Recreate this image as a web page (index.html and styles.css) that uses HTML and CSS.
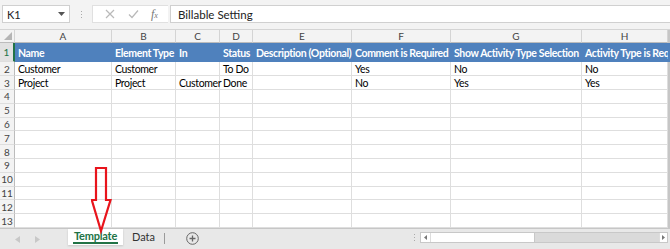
FILE: index.html
```html
<!DOCTYPE html>
<html>
<head>
<meta charset="utf-8">
<link rel="stylesheet" href="styles.css">
</head>
<body>
<div class="app">
  <div class="fbar">
    <div class="namebox"><span>K1</span><span class="dd">
      <svg width="7" height="4" viewBox="0 0 7 4"><path d="M0 0H7L3.5 4Z" fill="#555"/></svg></span></div>
    <div class="vdots"><i></i><i></i><i></i></div>
    <div class="fbtns">
      <svg width="10" height="10" viewBox="0 0 10 10"><path d="M1 1L9 9M9 1L1 9" stroke="#b9b9b9" stroke-width="1.2"/></svg>
      <svg width="11" height="10" viewBox="0 0 11 10"><path d="M1 5.5L4 8.5L10 1.5" stroke="#b9b9b9" stroke-width="1.2" fill="none"/></svg>
      <span class="fx">f<small>x</small></span>
    </div>
    <div class="finput">Billable Setting</div>
  </div>

  <div class="sheet top">
    <div class="corner"><svg width="8" height="8" viewBox="0 0 8 8"><path d="M8 0V8H0Z" fill="#b5b5b5"/></svg></div>
    <div class="ch">A</div><div class="ch">B</div><div class="ch">C</div><div class="ch">D</div><div class="ch">E</div><div class="ch">F</div><div class="ch">G</div><div class="ch">H</div><div class="edge"></div>

    <div class="rh sel">1</div>
    <div class="hc">Name</div><div class="hc">Element Type</div><div class="hc">In</div><div class="hc">Status</div><div class="hc">Description (Optional)</div><div class="hc">Comment is Required</div><div class="hc">Show Activity Type Selection</div><div class="hc last">Activity Type is Required</div><div class="edge hedge"></div>

    <div class="rh">2</div>
    <div class="c">Customer</div><div class="c">Customer</div><div class="c"></div><div class="c">To Do</div><div class="c"></div><div class="c">Yes</div><div class="c">No</div><div class="c">No</div><div class="edge"></div>

    <div class="rh">3</div>
    <div class="c">Project</div><div class="c">Project</div><div class="c">Customer</div><div class="c">Done</div><div class="c"></div><div class="c">No</div><div class="c">Yes</div><div class="c">Yes</div><div class="edge"></div>
  </div>
  <div class="sheet" id="empty"></div>

  <div class="tabbar">
    <div class="navs">
      <svg width="5" height="7" viewBox="0 0 5 7"><path d="M5 0V7L0 3.5Z" fill="#c8c8c8"/></svg>
      <svg width="5" height="7" viewBox="0 0 5 7"><path d="M0 0V7L5 3.5Z" fill="#c8c8c8"/></svg>
    </div>
    <div class="tab active"><span>Template</span></div>
    <div class="tab">Data</div>
    <div class="tsep"></div>
    <div class="plus"><svg width="13" height="13" viewBox="0 0 13 13"><circle cx="6.5" cy="6.5" r="5.8" fill="none" stroke="#666" stroke-width="1"/><path d="M6.5 3.5V9.5M3.5 6.5H9.5" stroke="#666" stroke-width="1.3"/></svg></div>
    <div class="spacer"></div>
    <div class="vdots small"><i></i><i></i><i></i></div>
    <div class="hscroll">
      <div class="sbtn"><svg width="3" height="5" viewBox="0 0 3 5"><path d="M3 0V5L0 2.5Z" fill="#777"/></svg></div>
      <div class="thumb"></div>
      <div class="track"></div>
      <div class="sbtn"><svg width="3" height="5" viewBox="0 0 3 5"><path d="M0 0V5L3 2.5Z" fill="#777"/></svg></div>
    </div>
  </div>

  <svg class="arrow" width="22" height="68" viewBox="0 0 22 68"><path d="M5 1H15V33H19.5L10 64L0.8 33H5Z" fill="none" stroke="#e8141c" stroke-width="2.2" stroke-linejoin="miter"/></svg>
</div>
<script>
  var e = document.getElementById('empty');
  var html = '';
  for (var r = 4; r <= 13; r++) {
    html += '<div class="rh">' + r + '</div>';
    for (var k = 0; k < 8; k++) html += '<div class="c"></div>';
    html += '<div class="edge"></div>';
  }
  e.innerHTML = html;
</script>
</body>
</html>
```

FILE: styles.css
```css
* { box-sizing: border-box; }
html, body { margin: 0; padding: 0; }
body {
  width: 670px; height: 249px; overflow: hidden; background: #fff;
  font-family: Lato, "Liberation Sans", sans-serif; font-size: 10.5px; letter-spacing: -0.35px; color: #000;
}
.app { position: relative; width: 670px; height: 249px; display: flex; flex-direction: column; }

.fbar {
  height: 30px; background: #f3f3f3; display: flex; align-items: center;
  padding: 5px 0 6px 2px; border-bottom: 1px solid #d4d4d4; letter-spacing: 0;
}
.namebox {
  width: 68px; height: 18px; background: #fff; border: 1px solid #d0d0d0;
  display: flex; align-items: center; justify-content: space-between; padding: 0 4px 0 4px;
  font-size: 11px; color: #222;
}
.dd { display: flex; }
.vdots { width: 22px; display: flex; flex-direction: column; align-items: center; gap: 2px; }
.vdots i { width: 1px; height: 1px; background: #aaa; display: block; }
.fbtns {
  width: 76px; height: 18px; background: #fff; border: 1px solid #e0e0e0; border-right: none;
  display: flex; align-items: center; justify-content: space-around; padding: 0 4px 0 6px;
}
.fx { font-family: "Liberation Serif", serif; font-style: italic; color: #777; font-size: 12px; }
.fx small { font-size: 8px; }
.finput {
  flex: 1; height: 18px; background: #fff; border: 1px solid #d0d0d0; border-right: none;
  margin-left: 2px; padding-left: 7px; display: flex; align-items: center; color: #222; font-size: 11.5px;
}

.sheet {
  display: grid;
  grid-template-columns: 15px 97px 64px 44px 33px 99px 99px 131px 86px 2px;
  grid-auto-rows: 14px;
}
.sheet.top { grid-template-rows: 13px 19px 14px 14px; }
#empty { grid-auto-rows: 13.8px; }
.corner, .ch, .rh {
  background: #f3f3f3; color: #444; font-size: 10px; letter-spacing: 0;
  display: flex; align-items: center; justify-content: center;
}
.corner { border-right: 1px solid #d4d4d4; border-bottom: 1px solid #bcbcbc; justify-content: flex-end; align-items: flex-end; padding: 0 2px 2px 0; }
.ch { border-right: 1px solid #d4d4d4; border-bottom: 1px solid #bcbcbc; }
.rh { border-right: 1px solid #bcbcbc; border-bottom: 1px solid #dedede; justify-content: center; }
.rh.sel { background: #e1e1e1; border-right: 2px solid #217346; color: #217346; }
.edge { background: #c6c6c6; }
.hedge { background: #4f81bd; }
.hc {
  background: #4f81bd; color: #fff; font-weight: bold; white-space: nowrap;
  padding: 1px 0 0 3px; display: flex; align-items: center;
}
.hc.last { overflow: hidden; }
.c {
  border-right: 1px solid #dedede; border-bottom: 1px solid #dedede; white-space: nowrap;
  padding: 1px 0 0 3px; display: flex; align-items: center;
}

.tabbar {
  flex: 1; background: #e8e8e8; border-top: 1px solid #c6c6c6; display: flex; align-items: flex-start; letter-spacing: 0;
}
.navs { width: 68px; display: flex; gap: 15px; padding: 7px 0 0 15px; }
.tab { height: 16px; padding: 0 9px; display: flex; align-items: center; color: #333; font-size: 11px; }
.tab.active { background: #fff; width: 55px; justify-content: center; padding: 0; box-shadow: 0 1px 2px rgba(0,0,0,0.15); }
.tab.active span { color: #217346; font-weight: bold; border-bottom: 2px solid #217346; line-height: 12px; padding: 0 1px; letter-spacing: -0.2px; }
.tsep { width: 1px; height: 11px; background: #9a9a9a; margin-top: 4px; }
.plus { padding: 3px 0 0 21px; }
.spacer { flex: 1; }
.vdots.small { width: 12px; padding-top: 5px; gap: 2px; }
.hscroll { width: 248px; height: 11px; margin-top: 3px; display: flex; border: 1px solid #c8c8c8; background: #fff; margin-right: 2px; }
.sbtn { width: 10px; display: flex; align-items: center; justify-content: center; border-right: 1px solid #ddd; }
.sbtn:last-child { border-right: none; border-left: 1px solid #ddd; width: 8px; }
.thumb { width: 104px; background: #fff; border-right: 1px solid #c8c8c8; }
.track { flex: 1; background: #dadada; }

.arrow { position: absolute; left: 91px; top: 167px; }
```
